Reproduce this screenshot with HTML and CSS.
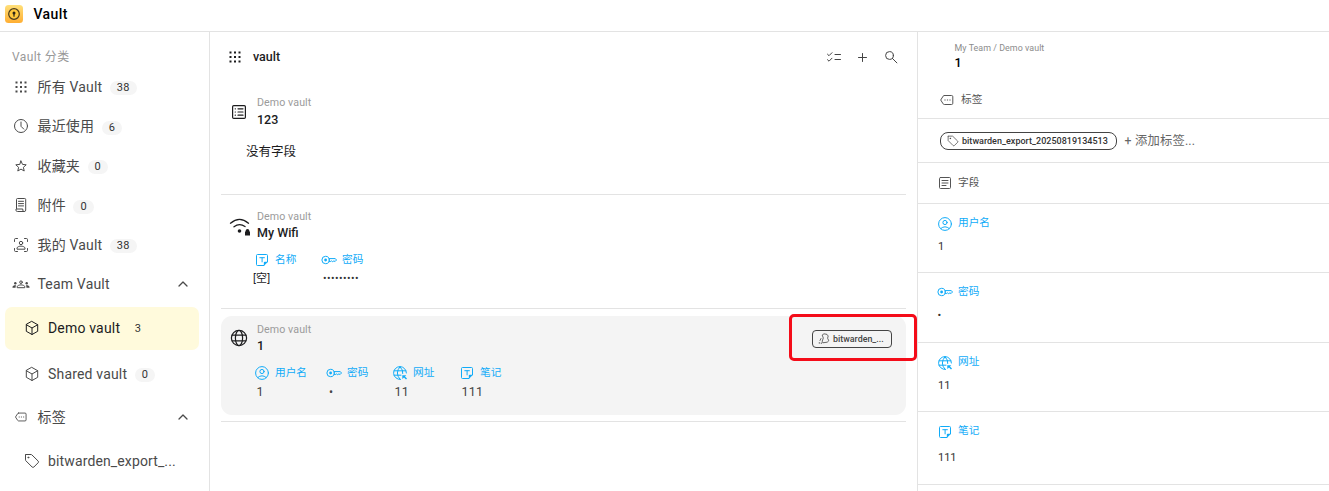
FILE: index.html
```html
<!DOCTYPE html>
<html lang="zh-CN">
<head>
<meta charset="utf-8">
<title>Vault</title>
<link rel="stylesheet" href="styles.css">
</head>
<body>
<svg class="defs" aria-hidden="true">
  <symbol id="dots" viewBox="0 0 14 14"><path fill="currentColor" stroke="none" d="M1.5 1.5h2v2h-2zM6 1.5h2v2H6zM10.500 1.500h2v2h-2zM1.500 6h2v2h-2zM6 6h2v2H6zM10.500 6h2v2h-2zM1.500 10.500h2v2h-2zM6 10.500h2v2H6zM10.500 10.500h2v2h-2z"/></symbol>
  <symbol id="clock" viewBox="0 0 16 16"><circle cx="8" cy="8" r="6.500"/><path d="M8 4v4.300l2.800 2.800"/></symbol>
  <symbol id="star" viewBox="0 0 16 16"><path d="M8 3l1.500 3.400 3.700.4-2.800 2.500.8 3.700L8 11.100 4.800 13l.8-3.700-2.800-2.500 3.700-.4z"/></symbol>
  <symbol id="doc" viewBox="0 0 16 16"><path d="M3.500 11.500v-9q0-1 1-1h7.200q1 0 1 1v10.600q0 1.400-1.400 1.400H4.600q-1.600 0-1.600-1.200v-1.300h6.800v1.300q0 1.200 1.400 1.200M5.500 4.300h5M5.500 6.600h5M5.500 8.900h5"/></symbol>
  <symbol id="scan" viewBox="0 0 16 16"><path d="M1.500 4.500V2.600q0-1.100 1.100-1.100h1.900M11.500 1.500h1.900q1.100 0 1.100 1.100v1.900M14.500 11.500v1.900q0 1.100-1.100 1.100h-1.900M4.500 14.500H2.600q-1.100 0-1.100-1.100v-1.900M4 11.800v-.7c0-1.300 2.600-2 4-2s4 .7 4 2v.7z"/><circle cx="8" cy="6" r="1.700"/></symbol>
  <symbol id="team" viewBox="0 0 18 10"><path d="M5.200 8.300v-.6c0-1.200 2.400-1.800 3.800-1.800s3.800.6 3.800 1.800v.6z"/><circle cx="9" cy="3.200" r="1.300"/><g fill="currentColor" stroke="none"><circle cx="3.300" cy="4.300" r="1.200"/><circle cx="14.700" cy="4.300" r="1.200"/><path d="M.5 8.800V7.900c0-1.300 1.800-1.900 3.700-1.700-.5.600-.6 1.200-.6 2.600zM17.500 8.800V7.900c0-1.300-1.800-1.900-3.700-1.700.5.600.6 1.200.6 2.600z"/></g></symbol>
  <symbol id="cube" viewBox="0 0 16 16"><path d="M8 1.500l5.700 3.200v6.600L8 14.500l-5.700-3.200V4.700zM2.300 4.700L8 8l5.700-3.300M8 8v6.500"/></symbol>
  <symbol id="label" viewBox="0 0 16 16"><path d="M5.300 3.500h7.300q1.200 0 1.200 1.200v6.600q0 1.200-1.200 1.200H5.300q-.7 0-1.100-.6L1.700 8l2.500-3.900q.4-.6 1.100-.6z"/><path stroke-linecap="butt" stroke-dasharray="1.200 1.300" d="M5.400 8h6.600"/></symbol>
  <symbol id="tag" viewBox="0 0 16 16"><path d="M1.500 1.800v5.100q0 .5.400.9l6.300 6.300q.8.700 1.600 0l4.400-4.400q.7-.8 0-1.600L7.900 1.900q-.4-.4-.9-.4H1.800z"/><circle cx="4.300" cy="4.500" r=".5"/></symbol>
  <symbol id="up" viewBox="0 0 12 12"><path d="M2 8l4-4 4 4"/></symbol>
  <symbol id="list" viewBox="0 0 16 16"><rect x="1.600" y="1.600" width="12.800" height="12.800" rx="1.200"/><path d="M7 4.800h5M7 8h5M7 11.200h5M4.200 4.800h.2M4.200 8h.2M4.200 11.200h.2"/></symbol>
  <symbol id="wifi" viewBox="0 0 22 20"><path d="M1.500 6.200Q10.500-1.500 19.500 6.200M5 9.800q5.500-4.300 11-.2"/><circle cx="10.500" cy="14" r="1.800" fill="currentColor" stroke="none"/><path fill="currentColor" stroke="none" d="M16 14.500h.7v-.9q0-1.700 1.800-1.700t1.800 1.700v.9h.7v3.900h-5z"/></symbol>
  <symbol id="globe" viewBox="0 0 18 18"><circle cx="9" cy="9" r="7.600"/><ellipse cx="9" cy="9" rx="3.600" ry="7.600"/><path d="M2.200 6.200h13.600M2.200 11.800h13.600"/></symbol>
  <symbol id="text" viewBox="0 0 14 14"><path d="M8.800 12.500H2.500q-1 0-1-1v-9q0-1 1-1h9q1 0 1 1v6.300M4.800 4.700h4.600M7.100 4.900v4"/><path fill="currentColor" stroke="none" d="M13 8.800L8.800 13V9.800q0-1 1-1z"/></symbol>
  <symbol id="key" viewBox="0 0 16 10"><circle cx="4.600" cy="5" r="3.700"/><circle cx="4.600" cy="5" r="1.400" fill="currentColor" stroke="none"/><path d="M8 3.600h6.300L15.500 5l-1.400 1.500-1.200-.6-1.200.8-1.200-.8-1.300.7H8"/></symbol>
  <symbol id="user" viewBox="0 0 14 14"><circle cx="7" cy="7" r="6.400"/><circle cx="7" cy="5.500" r="2.100"/><path d="M2.800 11.500Q7 7.900 11.200 11.500"/></symbol>
  <symbol id="web" viewBox="0 0 14 14"><path d="M13.400 7A6.400 6.400 0 1 0 7.500 13.400M7 .7Q1.500 7 7 13.300M7 .7Q10.400 4 9.800 7.500M1.200 4.800h11.600M1.200 9.200H8"/><path fill="currentColor" stroke="none" d="M9.300 9.200h4l-1.300 1.300 2 2-1 1-2-2-1.700 1.500z"/></symbol>
  <symbol id="checks" viewBox="0 0 16 12"><path d="M1.500 3.200l1.500 1.500 3-3M1.500 8.700l1.500 1.500 3-3M9 3.500h5.500M9 8.500h5.500"/></symbol>
  <symbol id="plus" viewBox="0 0 12 12"><path d="M6.500 2.500v8M2.500 6.500h8"/></symbol>
  <symbol id="search" viewBox="0 0 14 14"><circle cx="5.500" cy="5.500" r="3.900"/><path d="M8.300 8.300l4.600 4.600"/></symbol>
  <symbol id="article" viewBox="0 0 14 14"><rect x="1.500" y="1.500" width="11" height="11" rx="1"/><path d="M4 4.500h6M4 7h6M4 9.500h4"/></symbol>
  <symbol id="tags" viewBox="0 0 12 12"><path d="M4.500 1.800l1.500-1 3 .6 1.200 1.600-.6 2.200 1.200 2.600-1.600 1.400-4.400.6-.6-1.600 1-2.800zM3 5.500L2 7.500M1.300 9.500v.8M3.300 9.800v.8"/></symbol>
</svg>

<header class="topbar">
  <svg class="logo" viewBox="0 0 18 18"><defs><linearGradient id="gold" x2="0" y2="1"><stop stop-color="#ffe07a"/><stop offset="1" stop-color="#ffae32"/></linearGradient></defs><rect width="18" height="18" rx="3.500" fill="url(#gold)"/><circle cx="9" cy="9" r="5.300" fill="#ffc83d" stroke="#4b3b1c" stroke-width="1.200"/><circle cx="9" cy="8" r="1.500" fill="#2b2418"/><path d="M9 8v3.200" stroke="#2b2418" stroke-width="1.200"/></svg>
  <h1>Vault</h1>
</header>
<div class="layout">
  <nav class="sidebar">
    <h2>Vault 分类</h2>
    <a class="item"><svg class="i16 small"><use href="#dots"/></svg>所有 Vault<b>38</b></a>
    <a class="item"><svg class="i16"><use href="#clock"/></svg>最近使用<b>6</b></a>
    <a class="item"><svg class="i16"><use href="#star"/></svg>收藏夹<b>0</b></a>
    <a class="item"><svg class="i16"><use href="#doc"/></svg>附件<b>0</b></a>
    <a class="item"><svg class="i16"><use href="#scan"/></svg>我的 Vault<b>38</b></a>
    <a class="item"><svg class="team"><use href="#team"/></svg>Team Vault<svg class="chev"><use href="#up"/></svg></a>
    <a class="item sub active"><svg class="i16"><use href="#cube"/></svg>Demo vault<b>3</b></a>
    <a class="item sub shared"><svg class="i16"><use href="#cube"/></svg>Shared vault<b>0</b></a>
    <a class="item tagshead"><svg class="i16 small"><use href="#label"/></svg>标签<svg class="chev"><use href="#up"/></svg></a>
    <a class="item sub tagrow"><svg class="i16"><use href="#tag"/></svg>bitwarden_export_...</a>
  </nav>

  <main class="list">
    <div class="toolbar">
      <svg class="i14"><use href="#dots"/></svg><h2>vault</h2>
      <div class="tools"><svg class="checks"><use href="#checks"/></svg><svg class="plus"><use href="#plus"/></svg><svg class="i14"><use href="#search"/></svg></div>
    </div>
    <article class="entry first">
      <svg class="kind i16"><use href="#list"/></svg>
      <div class="title"><small>Demo vault</small><strong>123</strong></div>
      <p class="none">没有字段</p>
    </article>
    <article class="entry second">
      <svg class="kind wifi"><use href="#wifi"/></svg>
      <div class="title"><small>Demo vault</small><strong>My Wifi</strong></div>
      <div class="fields">
        <div class="field f-name"><span class="cap"><svg class="i14"><use href="#text"/></svg>名称</span><span class="val">[空]</span></div>
        <div class="field f-pass"><span class="cap"><svg class="key"><use href="#key"/></svg>密码</span><span class="val">•••••••••</span></div>
      </div>
    </article>
    <div class="selected-wrap">
      <article class="entry selected">
        <svg class="kind globe"><use href="#globe"/></svg>
        <div class="title"><small>Demo vault</small><strong>1</strong></div>
        <span class="minitag"><svg><use href="#tags"/></svg>bitwarden_...</span>
        <div class="fields">
          <div class="field c1"><span class="cap"><svg class="i14"><use href="#user"/></svg>用户名</span><span class="val">1</span></div>
          <div class="field c2"><span class="cap"><svg class="key"><use href="#key"/></svg>密码</span><span class="val">•</span></div>
          <div class="field c3"><span class="cap"><svg class="i14"><use href="#web"/></svg>网址</span><span class="val">11</span></div>
          <div class="field c4"><span class="cap"><svg class="i14"><use href="#text"/></svg>笔记</span><span class="val">111</span></div>
        </div>
        <span class="highlight"></span>
      </article>
    </div>
  </main>

  <aside class="detail">
    <div class="path"><small>My Team / Demo vault</small><strong>1</strong></div>
    <div class="section tags"><svg class="i16"><use href="#label"/></svg>标签</div>
    <div class="tagline"><span class="pill"><svg><use href="#tag"/></svg>bitwarden_export_20250819134513</span><span class="add">+ 添加标签...</span></div>
    <div class="section props"><svg class="i14"><use href="#article"/></svg>字段</div>
    <div class="prop"><span class="cap"><svg class="i14 low"><use href="#user"/></svg>用户名</span><span>1</span></div>
    <div class="prop"><span class="cap"><svg class="key"><use href="#key"/></svg>密码</span><span class="dot">•</span></div>
    <div class="prop"><span class="cap"><svg class="i14 low"><use href="#web"/></svg>网址</span><span>11</span></div>
    <div class="prop note"><span class="cap"><svg class="i14 low"><use href="#text"/></svg>笔记</span><span>111</span></div>
  </aside>
</div>
</body>
</html>
```
FILE: styles.css
```css
* { box-sizing: border-box; }
body { margin: 0; height: 491px; overflow: hidden; background: #fff; color: #1c1c1e; font: 14px/20px Roboto, "Noto Sans CJK SC", sans-serif; }
h1, h2, p { margin: 0; }
svg { flex: none; fill: none; stroke: currentColor; stroke-width: 1; stroke-linecap: round; stroke-linejoin: round; }
.defs { display: none; }
.i16 { width: 16px; height: 16px; }
.i14 { width: 14px; height: 14px; }
.key { width: 16px; height: 10px; }
.topbar { height: 32px; border-bottom: 1px solid #e3e3e3; display: flex; align-items: center; padding: 0 5px 3px; gap: 10.5px; }
.topbar h1 { font-size: 14px; font-weight: 500; letter-spacing: .4px; color: #000; }
.logo { width: 18px; height: 18px; stroke: none; }
.layout { display: grid; grid-template-columns: 210px 708px 1fr; height: 459px; }

.sidebar { border-right: 1px solid #e3e3e3; padding-top: 15px; color: #4a4a4a; }
.sidebar h2 { font-size: 12px; line-height: 20px; font-weight: 400; letter-spacing: .4px; color: #999; padding-left: 12px; }
.item { display: flex; align-items: center; height: 39.5px; padding: 0 20px 0 13px; letter-spacing: .18px; }
.item > svg:first-child { margin-right: 8.5px; }
.item .small { padding: 1px; }
.item b { font-size: 11px; line-height: 14px; font-weight: 400; color: #333; background: #f5f5f5; border-radius: 7px; padding: 0 7px; margin: 3px 0 0 7.5px; letter-spacing: .2px; }
.item .team { width: 18px; height: 10px; }
.item > svg.team:first-child { margin: 0 7.5px 0 -1px; }
.chev { width: 12px; height: 12px; margin-left: auto; stroke-width: 1.3; }
.sub { padding-left: 24px; }
.item.sub > svg:first-child { margin-right: 8px; }
.item.active { height: 43px; margin: 3px 10px 0 5px; padding: 0 0 2px 19px; background: #fffadc; border-radius: 7px; color: #1c1c1e; }
.active b { background: none; }
.shared { margin-top: 4px; }
.tagshead { margin-top: 4px; }
.tagrow { margin-top: 4px; }
.item.tagrow { letter-spacing: .13px; }

.list { border-right: 1px solid #e3e3e3; padding: 0 11px; }
.toolbar { display: flex; align-items: center; height: 50px; padding: 0 8px 0 7px; }
.toolbar h2 { font-size: 12.500px; font-weight: 500; margin-left: 11px; }
.tools { display: flex; align-items: center; gap: 14px; margin-left: auto; color: #444; }
.checks { width: 16px; height: 12px; }
.plus { width: 12px; height: 12px; margin-right: 2px; }
.entry { display: grid; grid-template-columns: 36px 1fr auto; align-content: start; border-bottom: 1px solid #e3e3e3; }
.kind { margin-left: 10px; stroke-width: 1.200; }
.kind.wifi { width: 22px; height: 20px; margin-left: 8px; stroke-width: 1.300; }
.kind.globe { width: 18px; height: 18px; margin-left: 9px; }
.title { display: flex; flex-direction: column; }
.title small { font-size: 10.670px; line-height: 14px; color: #9b9b9b; letter-spacing: .08px; }
.title strong { font-size: 12.500px; line-height: 18px; font-weight: 500; }
.first { height: 113px; padding-top: 14px; }
.first .kind { margin-top: 8px; }
.first strong { padding-top: 1px; line-height: 17px; }
.none { grid-column: 1 / -1; font-size: 12.500px; padding: 14px 0 0 25px; }
.second { height: 114px; padding-top: 15px; }
.second .kind { margin-top: 7px; }
.fields { grid-column: 1 / -1; display: flex; padding-left: 34px; }
.second .fields { padding-top: 8px; }
.field { display: flex; flex-direction: column; }
.cap { display: flex; align-items: center; gap: 6px; color: #10abf8; font-size: 10.670px; line-height: 20px; }
.key + * { margin-left: -1px; }
.val { font-size: 11px; line-height: 18px; letter-spacing: .2px; }
.field .key { margin-right: -1px; }
.f-name { width: 66px; }
.f-name .val { margin-left: -2px; }
.f-pass .val { padding-left: 2px; font-size: 10.500px; letter-spacing: .45px; color: #333; }
.selected-wrap { height: 113px; padding-top: 7px; border-bottom: 1px solid #e3e3e3; }
.selected { position: relative; height: 99px; padding-top: 7px; background: #f4f4f4; border: 0; border-radius: 11px; }
.selected .kind { margin-top: 6px; }
.selected .fields { padding-top: 8px; }
.selected .val { font-size: 12.500px; padding-left: 1.5px; color: #444; line-height: 18px; }
.c1 { width: 71px; } .c2 { width: 67px; } .c3 { width: 67px; }
.selected .c2 .val { font-size: 12px; padding-left: 3px; }
.minitag { display: flex; align-items: center; width: 80px; height: 18px; margin: 7px 14px 0 0; padding-left: 5px; gap: 3px; border: 1px solid #444; border-radius: 4px; font-size: 8.900px; font-weight: 500; color: #444; }
.minitag svg { width: 12px; height: 12px; stroke-width: .8; }
.highlight { position: absolute; left: 568px; top: -2px; width: 128px; height: 47px; border: 3px solid #f40c19; border-radius: 5px; }

.detail { color: #333; }
.path { display: flex; flex-direction: column; height: 48px; padding: 9px 0 0 36.5px; }
.path small { font-size: 8.900px; line-height: 14px; color: #8c8c8c; letter-spacing: .05px; }
.path strong { font-size: 12.500px; line-height: 16px; color: #000; font-weight: 500; }
.section { display: flex; align-items: center; gap: 6px; padding-left: 21px; font-size: 10.670px; color: #555; border-bottom: 1px solid #e3e3e3; }
.section.tags { height: 39px; padding-top: 1px; }
.section.props { height: 41px; padding-left: 20px; }
.tagline { display: flex; align-items: center; height: 44px; padding-left: 22px; border-bottom: 1px solid #e3e3e3; }
.pill { display: flex; align-items: center; width: 177px; height: 18px; border: 1px solid #444; border-radius: 8px; padding-left: 6px; gap: 3px; font-size: 9px; font-weight: 500; letter-spacing: .01px; }
.pill svg { width: 12px; height: 12px; stroke-width: .9; }
.add { margin-left: 7.5px; font-size: 12.300px; color: #666; letter-spacing: .2px; }
.prop { display: flex; flex-direction: column; height: 69.400px; padding: 9px 0 0 20px; border-bottom: 1px solid #e3e3e3; font-size: 11px; line-height: 20px; }
.prop .cap { margin-bottom: 4px; }
.prop .low { margin-top: 2px; }
.prop .key { margin: 0 -1px; }
.prop .dot { font-size: 11px; margin-left: -.5px; }
.note { height: 73px; }
.note .cap { margin-bottom: 7px; }
```
